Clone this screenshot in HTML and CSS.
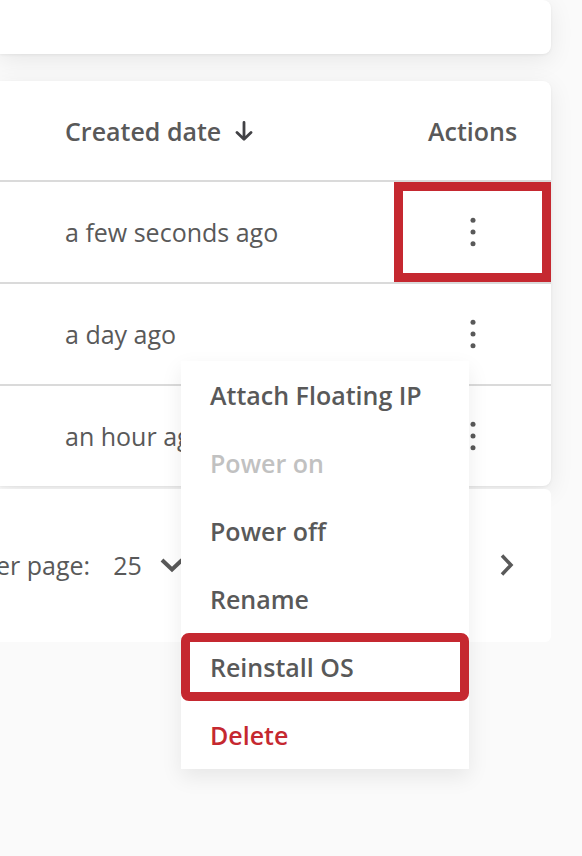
FILE: index.html
```html
<!DOCTYPE html>
<html lang="en">
<head>
<meta charset="utf-8">
<title>Servers</title>
<link rel="stylesheet" href="styles.css">
</head>
<body>
<main class="page">
  <section class="card summary"></section>
  <div class="listing">
    <section class="card">
      <table class="servers">
        <thead>
          <tr>
            <th><button class="sort" type="button">Created date
              <svg class="sort-icon" viewBox="0 0 18 20" aria-hidden="true"><path d="M9 1.5V18M2 11.5L9 18.2L16 11.5"/></svg>
            </button></th>
            <th class="actions">Actions</th>
          </tr>
        </thead>
        <tbody>
          <tr>
            <td>a few seconds ago</td>
            <td class="actions"><button class="kebab marked" type="button" aria-label="Actions"><svg class="dots" viewBox="0 0 6 30" aria-hidden="true"><circle cx="3" cy="3.2" r="2.5"/><circle cx="3" cy="15" r="2.5"/><circle cx="3" cy="26.8" r="2.5"/></svg></button></td>
          </tr>
          <tr>
            <td>a day ago</td>
            <td class="actions"><button class="kebab" type="button" aria-label="Actions"><svg class="dots" viewBox="0 0 6 30" aria-hidden="true"><circle cx="3" cy="3.2" r="2.5"/><circle cx="3" cy="15" r="2.5"/><circle cx="3" cy="26.8" r="2.5"/></svg></button></td>
          </tr>
          <tr>
            <td>an hour ago</td>
            <td class="actions"><button class="kebab" type="button" aria-label="Actions"><svg class="dots" viewBox="0 0 6 30" aria-hidden="true"><circle cx="3" cy="3.2" r="2.5"/><circle cx="3" cy="15" r="2.5"/><circle cx="3" cy="26.8" r="2.5"/></svg></button></td>
          </tr>
        </tbody>
      </table>
    </section>
    <div class="pager">
      <label for="size">er page:</label>
      <span class="size">
        <select id="size"><option>25</option></select>
        <svg class="chevron-down" viewBox="0 0 24 16" aria-hidden="true"><path d="M2 3L12 12.5L22 3"/></svg>
      </span>
      <button class="next" type="button" aria-label="Next page"><svg class="chevron-right" viewBox="0 0 14 22" aria-hidden="true"><path d="M2 1.5L11 11L2 20.5"/></svg></button>
    </div>
    <div class="menu">
      <button type="button">Attach Floating IP</button>
      <button type="button" disabled>Power on</button>
      <button type="button">Power off</button>
      <button type="button">Rename</button>
      <button type="button" class="marked">Reinstall OS</button>
      <button type="button" class="danger">Delete</button>
    </div>
  </div>
</main>
</body>
</html>
```
FILE: styles.css
```css
* {
  box-sizing: border-box;
}

body {
  margin: 0;
  background: #fafafa;
  color: #595959;
  font: 400 25px/34px "Open Sans", "Noto Sans", sans-serif;
}

button,
select {
  margin: 0;
  padding: 0;
  border: 0;
  background: none;
  color: inherit;
  font: inherit;
}

svg {
  display: block;
  fill: none;
  stroke: currentColor;
}

.page {
  display: flex;
  flex-direction: column;
  gap: 27px;
  min-height: 100vh;
  padding-right: 31px;
}

.card {
  background: #fff;
  border-radius: 0 8px 8px 0;
  box-shadow: 0 6px 24px rgba(0, 0, 0, 0.08), 0 1px 3px rgba(0, 0, 0, 0.06);
}

.summary {
  height: 54px;
}

.listing {
  position: relative;
}

.servers {
  width: 100%;
  border-collapse: separate;
  border-spacing: 0;
}

.servers th,
.servers td {
  height: 102px;
  padding: 0 0 0 65px;
  border-bottom: 2px solid #dadada;
  text-align: left;
  font-weight: 400;
}

.servers th {
  font-weight: 600;
}

.servers tbody tr:last-child td {
  height: 100px;
  border-bottom: 0;
}

.servers .actions {
  width: 157px;
  padding: 0;
  text-align: center;
}

.sort {
  display: flex;
  align-items: center;
  gap: 14px;
  font-weight: 600;
}

.sort-icon {
  width: 18px;
  height: 20px;
  color: #414145;
  stroke-width: 2.8;
  stroke-linecap: round;
  stroke-linejoin: round;
}

.kebab {
  display: grid;
  place-items: center;
  width: 100%;
  height: 100px;
}

.dots {
  width: 6px;
  height: 30px;
  fill: currentColor;
  stroke: none;
}

.marked {
  border: 9px solid #c52830;
}

.servers thead th {
  height: 101px;
}

.pager {
  display: flex;
  align-items: center;
  height: 153px;
  margin-top: 3px;
  padding: 0 37px 2px 0;
  background: #fff;
  border-radius: 0 6px 6px 0;
}

.pager label {
  margin-left: -4px;
}

.size {
  display: flex;
  align-items: center;
  gap: 18px;
  margin-left: 23px;
}

.size select {
  appearance: none;
}

.chevron-down {
  width: 24px;
  height: 16px;
  stroke-width: 4;
}

.next {
  margin-left: auto;
}

.chevron-right {
  width: 14px;
  height: 22px;
  stroke-width: 3.5;
}

.menu {
  position: absolute;
  top: 280px;
  right: 82px;
  width: 288px;
  background: #fff;
  box-shadow: 0 8px 20px rgba(0, 0, 0, 0.08);
}

.menu button {
  display: flex;
  align-items: center;
  width: 100%;
  height: 68px;
  padding: 0 29px;
  font-weight: 600;
}

.menu button:disabled {
  color: #c1c1c1;
}

.menu .marked {
  padding: 0 20px;
  border-radius: 8px;
}

.menu .danger {
  color: #c52830;
}
```
